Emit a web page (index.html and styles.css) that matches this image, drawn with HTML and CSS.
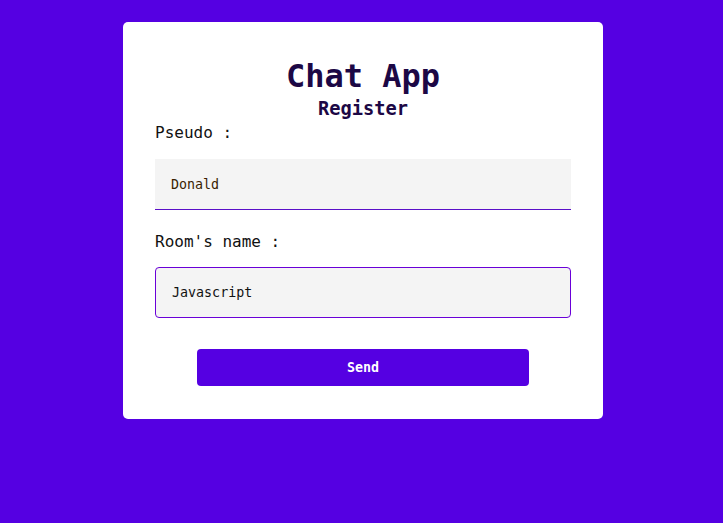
FILE: index.html
```html
<!DOCTYPE html>
<html>
<head>
<meta charset="utf-8">
<link rel="stylesheet" href="styles.css">
</head>
<body>
<div class="card">
  <h1 class="title">Chat App</h1>
  <h3 class="subtitle">Register</h3>
  <form class="form">
    <label class="label label-pseudo">Pseudo :</label>
    <input class="input input-line" type="text" value="Donald">
    <label class="label label-room">Room's name :</label>
    <input class="input input-box" type="text" value="Javascript">
    <button class="send" type="button">Send</button>
  </form>
</div>
</body>
</html>
```
FILE: styles.css
```css
html, body {
  margin: 0;
  padding: 0;
}
body {
  background: #5500e2;
  min-height: 100vh;
  padding-left: 3px;
  box-sizing: border-box;
  font-family: "DejaVu Sans Mono", "Liberation Mono", monospace;
  overflow: hidden;
}
.card {
  box-sizing: border-box;
  width: 480px;
  margin: 22px auto 0;
  background: #ffffff;
  border-radius: 5px;
  padding: 35px 32px 33px;
}
.title {
  margin: 0;
  text-align: center;
  font-size: 32px;
  line-height: 38px;
  font-weight: bold;
  color: #1c0845;
}
.subtitle {
  margin: 5px 0 0;
  text-align: center;
  font-size: 18.72px;
  line-height: 18px;
  font-weight: bold;
  color: #1c0845;
}
.form {
  display: flex;
  flex-direction: column;
}
.label {
  font-size: 16px;
  line-height: 20px;
  color: #111111;
  margin-top: 0;
  margin-bottom: 16px;
}
.label-pseudo {
  margin-top: 5px;
}
.label-room {
  margin-top: 22px;
  margin-bottom: 15px;
}
.input {
  box-sizing: border-box;
  width: 100%;
  height: 51px;
  background: #f4f4f4;
  font-family: "DejaVu Sans Mono", "Liberation Mono", monospace;
  font-size: 13.33px;
  padding: 0 16px;
  outline: none;
}
.input-line {
  border: none;
  border-bottom: 1px solid #5a0fc8;
  color: #3a1d00;
}
.input-box {
  border: 1px solid #6a00d8;
  border-radius: 4px;
  color: #111;
}
.send {
  align-self: center;
  width: 332px;
  height: 37px;
  margin-top: 31px;
  background: #5500e2;
  color: #ffffff;
  border: none;
  border-radius: 4px;
  font-family: "DejaVu Sans Mono", "Liberation Mono", monospace;
  font-size: 13.33px;
  font-weight: bold;
}
```
